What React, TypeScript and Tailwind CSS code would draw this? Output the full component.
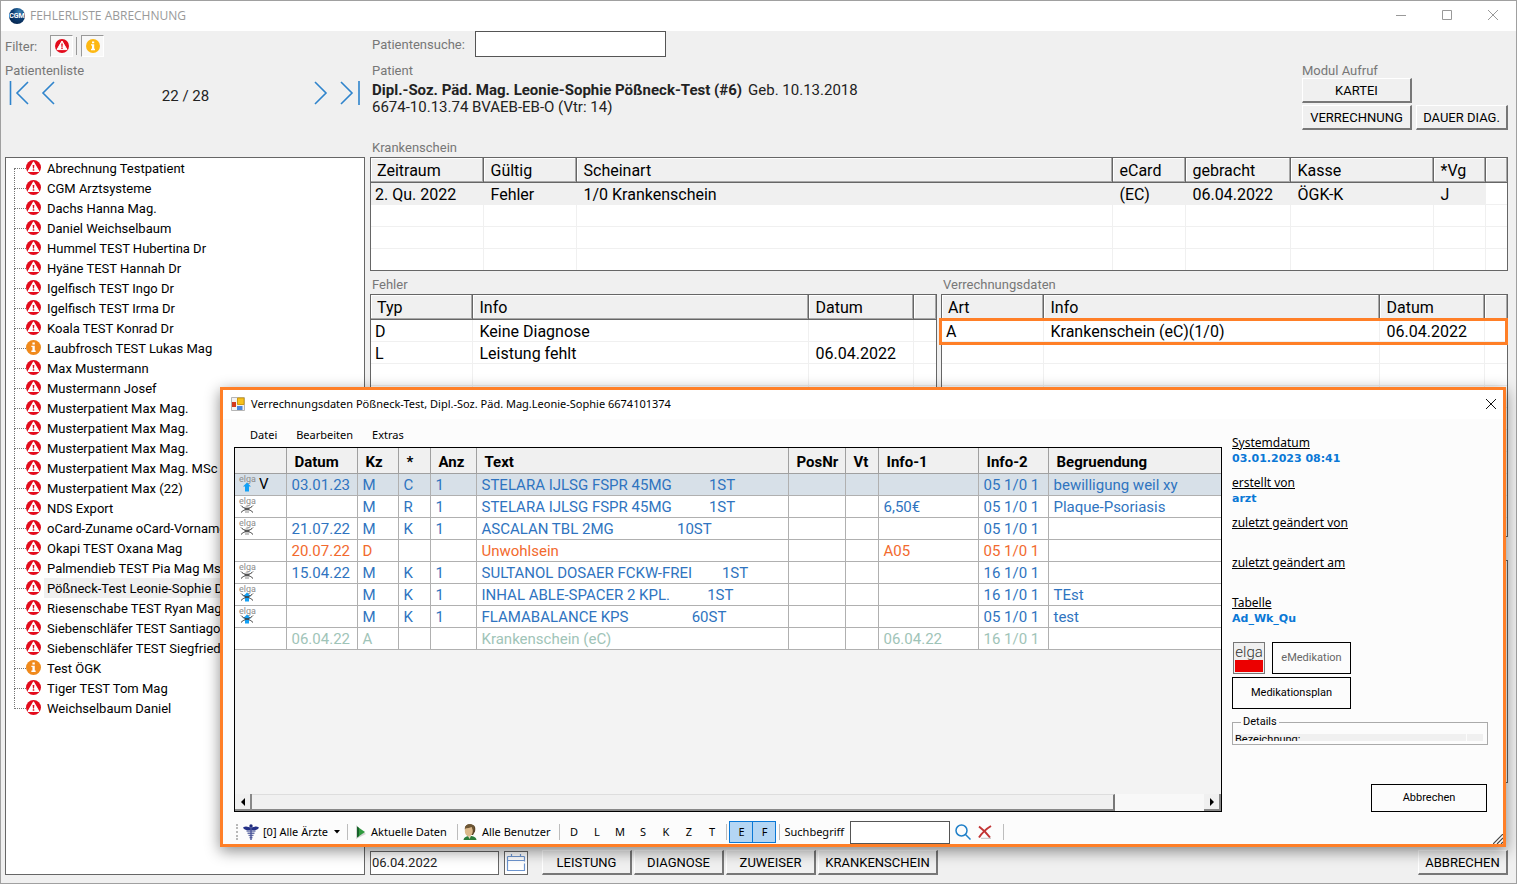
import type { ReactNode } from 'react';
import { clsx } from 'clsx';

type PatientEntry = { name: string; info?: boolean; selected?: boolean };

const PATIENTS: PatientEntry[] = [
  { name: 'Abrechnung Testpatient' },
  { name: 'CGM Arztsysteme' },
  { name: 'Dachs Hanna Mag.' },
  { name: 'Daniel Weichselbaum' },
  { name: 'Hummel TEST Hubertina Dr' },
  { name: 'Hyäne TEST Hannah Dr' },
  { name: 'Igelfisch TEST Ingo Dr' },
  { name: 'Igelfisch TEST Irma Dr' },
  { name: 'Koala TEST Konrad Dr' },
  { name: 'Laubfrosch TEST Lukas Mag', info: true },
  { name: 'Max Mustermann' },
  { name: 'Mustermann Josef' },
  { name: 'Musterpatient Max Mag.' },
  { name: 'Musterpatient Max Mag.' },
  { name: 'Musterpatient Max Mag.' },
  { name: 'Musterpatient Max Mag. MSc' },
  { name: 'Musterpatient Max (22)' },
  { name: 'NDS Export' },
  { name: 'oCard-Zuname oCard-Vorname' },
  { name: 'Okapi TEST Oxana Mag' },
  { name: 'Palmendieb TEST Pia Mag Msc' },
  { name: 'Pößneck-Test Leonie-Sophie D', selected: true },
  { name: 'Riesenschabe TEST Ryan Mag' },
  { name: 'Siebenschläfer TEST Santiago' },
  { name: 'Siebenschläfer TEST Siegfried' },
  { name: 'Test ÖGK', info: true },
  { name: 'Tiger TEST Tom Mag' },
  { name: 'Weichselbaum Daniel' },
];

type ElgaState = 'sent' | 'cancelled' | 'both';

type BillingRow = {
  elga?: ElgaState;
  flag?: string;
  tone: string;
  cells: string[];
  selected?: boolean;
};

const BLUE = 'text-[#2f74c0]';

const BILLING_COLUMNS = ['', 'Datum', 'Kz', '*', 'Anz', 'Text', 'PosNr', 'Vt', 'Info-1', 'Info-2', 'Begruendung'];

const BILLING_ROWS: BillingRow[] = [
  { elga: 'sent', flag: 'V', tone: BLUE, selected: true, cells: ['03.01.23', 'M', 'C', '1', 'STELARA IJLSG FSPR 45MG          1ST', '', '', '', '05 1/0 1', 'bewilligung weil xy'] },
  { elga: 'cancelled', tone: BLUE, cells: ['', 'M', 'R', '1', 'STELARA IJLSG FSPR 45MG          1ST', '', '', '6,50€', '05 1/0 1', 'Plaque-Psoriasis'] },
  { elga: 'cancelled', tone: BLUE, cells: ['21.07.22', 'M', 'K', '1', 'ASCALAN TBL 2MG                 10ST', '', '', '', '05 1/0 1', ''] },
  { tone: 'text-[#f26a2e]', cells: ['20.07.22', 'D', '', '', 'Unwohlsein', '', '', 'A05', '05 1/0 1', ''] },
  { elga: 'cancelled', tone: BLUE, cells: ['15.04.22', 'M', 'K', '1', 'SULTANOL DOSAER FCKW-FREI        1ST', '', '', '', '16 1/0 1', ''] },
  { elga: 'both', tone: BLUE, cells: ['', 'M', 'K', '1', 'INHAL ABLE-SPACER 2 KPL.          1ST', '', '', '', '16 1/0 1', 'TEst'] },
  { elga: 'both', tone: BLUE, cells: ['', 'M', 'K', '1', 'FLAMABALANCE KPS                 60ST', '', '', '', '05 1/0 1', 'test'] },
  { tone: 'text-[#9fc4b8]', cells: ['06.04.22', 'A', '', '', 'Krankenschein (eC)', '', '', '06.04.22', '16 1/0 1', ''] },
];

function AlertIcon({ className }: { className?: string }) {
  return (
    <svg viewBox="0 0 14 14" className={clsx('shrink-0', className)} aria-hidden="true">
      <circle cx="7" cy="7" r="7" fill="#e30b1c" />
      <path d="M7 2 12 10.600H2z" fill="#fff" stroke="#fff" strokeWidth="1" strokeLinejoin="round" />
      <path d="M6.200 4.600h1.600L7.500 8h-1zM6.300 8.600h1.400V10H6.300z" fill="#e30b1c" />
    </svg>
  );
}

function InfoIcon({ className, color }: { className?: string; color: string }) {
  return (
    <svg viewBox="0 0 14 14" className={clsx('shrink-0', className)} aria-hidden="true">
      <circle cx="7" cy="7" r="7" fill={color} />
      <path d="M6 2.400h2.200v1.900H6zM5 5.300h3.200v4.500H9V11.200H5V9.800h1V6.600H5z" fill="#fff" />
    </svg>
  );
}

function CgmLogo() {
  return (
    <svg viewBox="0 0 16 16" className="size-4" aria-hidden="true">
      <defs>
        <radialGradient id="cgm" cx="0.65" cy="0.25" r="0.8">
          <stop offset="0" stopColor="#3f86b8" />
          <stop offset="0.5" stopColor="#0d3f75" />
          <stop offset="1" stopColor="#06264f" />
        </radialGradient>
      </defs>
      <circle cx="8" cy="8" r="8" fill="url(#cgm)" />
      <text x="8" y="10" textAnchor="middle" fontSize="7" fontWeight="700" fill="#fff" fontFamily="Roboto, sans-serif">CGM</text>
    </svg>
  );
}

function ElgaIcon({ state }: { state: ElgaState }) {
  return (
    <svg viewBox="0 0 16 16" className="size-4 shrink-0 overflow-visible" aria-hidden="true">
      <text x="0" y="6" fontSize="9" fill="#8c8c8c" fontFamily="Roboto, sans-serif">elga</text>
      {state === 'cancelled' && <path d="M8 7 11.500 10.500H10V15H6V10.500H4.500z" fill="#c4c4c4" />}
      {state !== 'cancelled' && <path d="M8 6.500 12 10.500h-2V15.500H6V10.500H4z" fill="#12a0f5" />}
      {state !== 'sent' && (
        <path d="M2 7.500c1 1.500 3.500 2.700 6 3.500s4.500 1.800 6 3.500M14 7.500c-1 1.500-3.500 2.700-6 3.500s-4.500 1.800-6 3.500" stroke="#3a3a3a" strokeWidth="1" fill="none" />
      )}
    </svg>
  );
}

function NavArrow({ label, d, className }: { label: string; d: string; className?: string }) {
  return (
    <button type="button" aria-label={label} className={clsx('h-6 w-5', className)}>
      <svg viewBox="0 0 20 24" className="h-6 w-5" fill="none" stroke="#2f84cc" strokeWidth="1.600">
        <path d={d} />
      </svg>
    </button>
  );
}

function ClassicButton({ children, className }: { children: ReactNode; className?: string }) {
  return (
    <button
      type="button"
      className={clsx(
        'h-[25px] border-t border-l border-r-2 border-b-2 border-t-white border-l-white border-r-[#777] border-b-[#777] bg-[#f0f0f0] pt-0.5 text-[13px] leading-4 whitespace-nowrap text-black',
        className,
      )}
    >
      {children}
    </button>
  );
}

function ClassicGrid({
  widths,
  columns,
  rows,
  emptyRows,
  highlight,
}: {
  widths: string[];
  columns: string[];
  rows: string[][];
  emptyRows: number;
  highlight?: boolean;
}) {
  const lines = [...rows, ...Array.from({ length: emptyRows }, () => columns.map(() => ''))];
  return (
    <table className="w-full table-fixed border-collapse text-[16px] leading-5 text-black">
      <colgroup>
        {widths.map((w, i) => <col key={i} className={w} />)}
      </colgroup>
      <thead>
        <tr className="h-6 bg-[#f0f0f0]">
          {columns.map((c, i) => (
            <th
              key={i}
              className="border-b border-r border-[#666] p-0 text-left font-normal shadow-[inset_-1px_-1px_0_#a8a8a8,inset_1px_1px_0_#fff] last:border-r-0"
            >
              <div className={clsx('h-[23px] pt-[3px]', i === 0 ? 'pl-1.5' : 'pl-[7px]')}>{c}</div>
            </th>
          ))}
        </tr>
      </thead>
      <tbody>
        {lines.map((r, y) => (
          <tr key={y} className="h-[22px]">
            {r.map((c, i) => (
              <td
                key={i}
                className={clsx(
                  'overflow-hidden border-r border-b border-[#f0f0f0] p-0 whitespace-nowrap last:border-r-0',
                  highlight && y === 0 && i < r.length - 1 && 'bg-[#f0f0f0]',
                )}
              >
                <div className={clsx('h-[21px] pt-[3px] leading-[18px]', i === 0 ? 'pl-1' : 'pl-[7px]')}>{c}</div>
              </td>
            ))}
          </tr>
        ))}
      </tbody>
    </table>
  );
}

function PatientTree() {
  return (
    <ul className="flex-1 overflow-hidden border border-[#666] bg-white text-[13px] leading-[22px] text-black">
      {PATIENTS.map((p, i) => (
        <li key={i} className="flex h-5 items-center pl-2">
          <span className="flex h-5 w-3 shrink-0 flex-col">
            <span className={clsx('h-[11px] border-b border-dotted border-[#777]', i > 0 && 'border-l')} />
            <span className={clsx('flex-1 border-dotted border-[#777]', i < PATIENTS.length - 1 && 'border-l')} />
          </span>
          <span className="flex h-5 items-start pt-0.5">
            {p.info ? <InfoIcon color="#f08a1c" className="size-[15px]" /> : <AlertIcon className="size-[15px]" />}
          </span>
          <span className={clsx('ml-[3px] h-5 flex-1 pl-[3px] whitespace-nowrap', p.selected && 'bg-[#f0f0f0]')}>{p.name}</span>
        </li>
      ))}
    </ul>
  );
}

function BillingTable() {
  return (
    <div className="flex flex-1 flex-col border border-black bg-[#f3f3f3]">
      <table className="w-full table-fixed border-collapse text-[15px] leading-5">
        <colgroup>
          <col className="w-[51px]" />
          <col className="w-[71px]" />
          <col className="w-[41px]" />
          <col className="w-8" />
          <col className="w-[46px]" />
          <col />
          <col className="w-[57px]" />
          <col className="w-[33px]" />
          <col className="w-[100px]" />
          <col className="w-[70px]" />
          <col className="w-[173px]" />
        </colgroup>
        <thead>
          <tr className="h-[25px] border-b border-[#a0a0a0] bg-[#f0f0f0]">
            {BILLING_COLUMNS.map((c, i) => (
              <th key={i} className="border-r border-[#a0a0a0] p-0 text-left font-bold text-black last:border-r-0">
                <div className="h-[22px] pt-[3px] pl-2">{c}</div>
              </th>
            ))}
          </tr>
        </thead>
        <tbody>
          {BILLING_ROWS.map((row, y) => (
            <tr key={y} className={clsx('h-[22px] border-b border-[#b0b0b0]', row.selected ? 'bg-[#d7e0e8]' : 'bg-white', row.tone)}>
              <td className="border-r border-[#b0b0b0] p-0">
                <div className="flex h-5 items-center gap-1 pl-1">
                  {row.elga && <ElgaIcon state={row.elga} />}
                  <span className="text-black">{row.flag}</span>
                </div>
              </td>
              {row.cells.map((c, i) => (
                <td key={i} className="border-r border-[#b0b0b0] p-0 whitespace-pre last:border-r-0">
                  <div className="h-[21px] pt-px pl-[5px]">{c}</div>
                </td>
              ))}
            </tr>
          ))}
        </tbody>
      </table>
      <div className="mt-auto flex h-[17px] bg-[#f8f8f8]">
        <button type="button" aria-label="Nach links" className="flex w-[17px] items-center justify-center border-r-2 border-b-2 border-[#888] bg-[#f0f0f0] text-black">
          <svg viewBox="0 0 4 8" className="h-2 w-1"><path d="M4 0v8L0 4z" /></svg>
        </button>
        <div className="w-[863px] max-w-full border-t border-r-2 border-b-2 border-t-[#ddd] border-r-[#777] border-b-[#888] bg-[#f0f0f0]" />
        <button type="button" aria-label="Nach rechts" className="ml-auto flex w-[17px] items-center justify-center border-r-2 border-b-2 border-[#888] bg-[#f0f0f0]">
          <svg viewBox="0 0 4 8" className="h-2 w-1"><path d="M0 0v8l4-4z" /></svg>
        </button>
      </div>
    </div>
  );
}

function Divider() {
  return <span className="h-4 w-px shrink-0 bg-[#bdbdbd]" />;
}

function DialogToolbar() {
  return (
    <div className="flex h-8 items-center pt-2 text-[11px] leading-4 whitespace-nowrap text-black">
      <span className="ml-0.5 h-4 w-0.5 border-l-2 border-dotted border-[#b8b8b8]" />
      <button type="button" className="ml-[5px] flex items-center gap-1">
        <svg viewBox="0 0 16 16" className="size-4" aria-hidden="true">
          <circle cx="8" cy="2" r="1.700" fill="#1f2a7a" />
          <path d="M0 3.500c3-2 5-.5 8 .2 3-.7 5-2.200 8-.2-1 2.500-4 3-6 2.500H6c-2 .5-5 0-6-2.500z" fill="#232f86" />
          <path d="M3.500 7h9M4.500 9.200h7M5.500 11.400h5M6.500 13.500h3" stroke="#6670a8" strokeWidth="1.400" />
          <path d="M8 3v13" stroke="#4a5499" strokeWidth="1.400" />
        </svg>
        [0] Alle Ärzte
        <svg viewBox="0 0 6 4" className="ml-0.5 h-1 w-1.5"><path d="M0 0h6L3 3.500z" /></svg>
      </button>
      <span className="w-[7px]" />
      <Divider />
      <button type="button" className="ml-[7px] flex items-center gap-1">
        <svg viewBox="0 0 12 16" className="h-4 w-3" aria-hidden="true">
          <path d="M1 1v14l10-5z" fill="#d4d4d4" />
          <path d="M2 2.500v11l8-5.500z" fill="#2f9a3e" />
          <path d="M2 2.500v11l2-1.500V4z" fill="#17602a" />
        </svg>
        Aktuelle Daten
      </button>
      <span className="w-2.5" />
      <Divider />
      <button type="button" className="ml-1 flex items-center gap-1">
        <svg viewBox="0 0 16 16" className="size-4" aria-hidden="true">
          <path d="M1.500 16c.5-3 3-4 6.500-4s6 1 6.500 4z" fill="#2c7d3b" />
          <path d="M3 6c-1-4 2-6 5.500-5.800C12.500.5 14 3 13 7.500L11 11H5z" fill="#5b4427" />
          <ellipse cx="6.800" cy="7" rx="4" ry="5.200" fill="#dcb98b" />
          <path d="M3 4.500C5 4 8 4 10 2.500 11 3 11.500 5 11.200 7c2-3 1-6.500-3-6.700C5 .2 3 2 3 4.500z" fill="#6e5735" />
          <path d="M6 12h3l-1.500 3z" fill="#e6d4b6" />
        </svg>
        Alle Benutzer
      </button>
      <span className="w-[9px]" />
      <Divider />
      <div className="ml-0.5 flex">
        {['D', 'L', 'M', 'S', 'K', 'Z', 'T'].map((k) => (
          <button key={k} type="button" className="h-[22px] w-[23px]">{k}</button>
        ))}
      </div>
      <span className="w-[3px]" />
      <Divider />
      <div className="ml-0.5 flex">
        <button type="button" className="h-[22px] w-6 border border-[#0a78d6] bg-[#b4d6f4]">E</button>
        <button type="button" className="-ml-px h-[22px] w-6 border border-[#0a78d6] bg-[#b4d6f4]">F</button>
      </div>
      <span className="w-[3px]" />
      <Divider />
      <label htmlFor="suchbegriff" className="ml-1">Suchbegriff</label>
      <input id="suchbegriff" type="text" className="ml-1.5 h-[23px] w-[100px] border border-[#555] bg-white px-1" />
      <button type="button" aria-label="Suchen" className="ml-[5px]">
        <svg viewBox="0 0 16 16" className="size-4" fill="none" stroke="#1f7fc8" strokeWidth="1.500">
          <circle cx="6.500" cy="6.500" r="5.500" />
          <path d="m10.500 10.500 5 5" />
        </svg>
      </button>
      <button type="button" aria-label="Suche löschen" className="ml-[7px]">
        <svg viewBox="0 0 14 14" className="size-[14px]" fill="none">
          <path d="M3 13.500h10" stroke="#ccc" strokeWidth="1.500" />
          <path d="M1 1.500c4 3 8 7 11 11" stroke="#c23434" strokeWidth="2" />
          <path d="M13 1C8 4 4 8 1 12.500" stroke="#c23434" strokeWidth="2" />
        </svg>
      </button>
      <span className="ml-[11px] h-4 w-px bg-[#bdbdbd]" />
    </div>
  );
}

function MetaField({ label, value }: { label: string; value?: string }) {
  return (
    <div>
      <dt className="h-4 underline">{label}</dt>
      <dd className="h-6 font-['DejaVu_Sans',sans-serif] text-[11px] font-bold text-[#0a78d6]">{value}</dd>
    </div>
  );
}

function DialogSidebar() {
  return (
    <aside className="flex w-64 flex-col pt-4 text-black">
      <dl className="text-[12px] leading-4">
        <MetaField label="Systemdatum" value="03.01.2023 08:41" />
        <MetaField label="erstellt von" value="arzt" />
        <MetaField label="zuletzt geändert von" />
        <MetaField label="zuletzt geändert am" />
        <MetaField label="Tabelle" value="Ad_Wk_Qu" />
      </dl>
      <div className="mt-[7px] ml-px flex gap-[7px] font-['Roboto',sans-serif] text-[11px]">
        <button type="button" className="flex h-8 w-8 flex-col border border-[#777] bg-[#f0f0f0] p-px">
          <span className="h-4 w-full text-center text-[15px] leading-4 font-light text-[#333]">elga</span>
          <span className="h-3 w-full bg-[#ec0000]" />
        </button>
        <button type="button" className="h-8 w-[79px] border border-black bg-[#fcfcfc] text-[#666]">eMedikation</button>
      </div>
      <button type="button" className="mt-[3px] h-8 w-[119px] border border-black bg-[#fcfcfc] font-['Roboto',sans-serif] text-[11px]">Medikationsplan</button>
      <fieldset className="mt-1 h-8 min-w-0 border border-[#aaa] px-0.5 font-['Roboto',sans-serif] text-[11px] leading-4">
        <legend className="ml-1.5 px-0.5 leading-[18px]">Details</legend>
        <div className="mt-[3px] mr-0.5 flex h-[7px] gap-px overflow-hidden leading-3">
          <span className="flex-1 bg-[#f0f0f0]">Bezeichnung:</span>
          <span className="w-4 bg-[#f0f0f0]" />
        </div>
      </fieldset>
      <button type="button" className="mt-auto mr-px mb-8 h-7 w-[116px] self-end border border-black bg-[#fcfcfc] font-['Roboto',sans-serif] text-[11px]">Abbrechen</button>
    </aside>
  );
}

function BillingDialog() {
  return (
    <section
      role="dialog"
      aria-labelledby="billing-title"
      className="absolute top-[386px] right-[10px] bottom-[36px] left-[219px] flex flex-col border-[3px] border-[#ff7f27] bg-[#fcfcfc] font-['Noto_Sans',sans-serif] shadow-[0_4px_14px_rgba(0,0,0,0.45)]"
    >
      <div className="flex h-[29px] items-center bg-white pr-1.5 pb-0.5 pl-2">
        <svg viewBox="0 0 14 14" className="size-[14px]" aria-hidden="true">
          <path d="M.5.5h13v13H.5z" fill="#f2f2f2" stroke="#b5b5b5" />
          <path d="M1 5h4v5H1z" fill="#d23a1e" />
          <path d="M6.500 1h6.500v6.500H6.500z" fill="#f6c11d" stroke="#d09a10" />
          <path d="M6 9h5.500v4H6z" fill="#4a86dc" />
        </svg>
        <h2 id="billing-title" className="ml-1.5 text-[11px] leading-4 text-black">
          Verrechnungsdaten Pößneck-Test, Dipl.-Soz. Päd. Mag.Leonie-Sophie 6674101374
        </h2>
        <button type="button" aria-label="Schließen" className="ml-auto">
          <svg viewBox="0 0 12 12" className="size-3" stroke="#111" fill="none"><path d="m1 1 10 10M11 1 1 11" /></svg>
        </button>
      </div>
      <div className="flex flex-1 gap-2.5 pr-[15px] pl-[11px]">
        <div className="flex min-w-0 flex-1 flex-col">
          <nav className="flex h-7 items-center gap-[19px] pt-1 pl-4 text-[11px] leading-4 text-black">
            <button type="button">Datei</button>
            <button type="button">Bearbeiten</button>
            <button type="button">Extras</button>
          </nav>
          <div className="flex flex-1 flex-col font-['Roboto',sans-serif]"><BillingTable /></div>
          <DialogToolbar />
        </div>
        <DialogSidebar />
      </div>
      <svg viewBox="0 0 10 10" className="absolute right-0 bottom-0 size-2.5" stroke="#444" strokeWidth="1.200" aria-hidden="true">
        <path d="M0 10 10 0M4 10l6-6M8 10l2-2" />
      </svg>
    </section>
  );
}

export default function App() {
  return (
    <div className="relative flex min-h-screen flex-col border border-[#a0a0a0] bg-[#f0f0f0] font-['Roboto',sans-serif] text-[13px] leading-4 text-[#777]">
      <header className="flex h-[30px] items-center bg-white pr-[17px] pl-2">
        <CgmLogo />
        <h1 className="ml-[5px] font-['Open_Sans',sans-serif] text-[12px] text-[#999]">FEHLERLISTE ABRECHNUNG</h1>
        <div className="ml-auto flex items-center gap-[34px]">
          <button type="button" aria-label="Minimieren"><svg viewBox="0 0 12 12" className="size-3" stroke="#999" fill="none"><path d="M1 5.500h10" /></svg></button>
          <button type="button" aria-label="Maximieren"><svg viewBox="0 0 12 12" className="size-3" stroke="#999" fill="none"><path d="M1.500.5h9v9h-9z" /></svg></button>
          <button type="button" aria-label="Schließen"><svg viewBox="0 0 12 12" className="size-3" stroke="#999" fill="none"><path d="m1 0 10 10M11 0 1 10" /></svg></button>
        </div>
      </header>

      <main className="flex flex-1 gap-[5px] pr-2 pb-2 pl-1">
        <div className="flex w-[360px] shrink-0 flex-col">
          <div className="flex h-[126px] shrink-0 flex-col pt-1">
            <div className="flex h-[22px] items-center">
              <span className="w-[45px] pt-0.5">Filter:</span>
              <button type="button" aria-label="Fehler" className="flex h-[22px] w-[23px] items-center justify-center border border-t-[#999] border-l-[#999] border-r-white border-b-white bg-[#f8f8f8]">
                <AlertIcon className="size-[14px]" />
              </button>
              <span className="mx-[3px] h-[18px] w-px bg-[#999]" />
              <button type="button" aria-label="Hinweise" className="ml-px flex h-[22px] w-[23px] items-center justify-center border border-t-[#999] border-l-[#999] border-r-white border-b-white bg-[#f8f8f8]">
                <InfoIcon color="#fdb813" className="size-[14px]" />
              </button>
            </div>
            <div className="mt-1.5">Patientenliste</div>
            <div className="mt-0.5 flex h-6 items-center pr-[5px] pl-1">
              <NavArrow label="Erster Patient" d="M1.500 0v24M19 1 8 12l11 11" />
              <NavArrow label="Voriger Patient" d="M13 1 2 12l11 11" className="ml-3" />
              <span className="flex-1 pt-1.5 text-center text-[15px] text-[#222]">22 / 28</span>
              <NavArrow label="Nächster Patient" d="M5 1l11 11L5 23" className="mr-2.5" />
              <NavArrow label="Letzter Patient" d="M1 1l11 11L1 23M19 0v24" />
            </div>
          </div>
          <PatientTree />
        </div>

        <div className="flex min-w-0 flex-1 flex-col">
          <div className="flex h-[126px] shrink-0 justify-between">
            <div className="flex flex-col pl-0.5">
              <div className="flex h-[26px] items-center">
                <label htmlFor="patientensuche" className="w-[103px] pt-0.5">Patientensuche:</label>
                <input id="patientensuche" type="text" className="h-[26px] w-[191px] border border-[#555] bg-white px-1 text-black" />
              </div>
              <div className="mt-1.5">Patient</div>
              <div className="mt-[3px] text-[15px] leading-[17px] text-[#222]">
                <div><strong className="mr-1.5 font-bold">Dipl.-Soz. Päd. Mag. Leonie-Sophie Pößneck-Test (#6)</strong>Geb. 10.13.2018</div>
                <div>6674-10.13.74 BVAEB-EB-O (Vtr: 14)</div>
              </div>
              <div className="mt-auto mb-px">Krankenschein</div>
            </div>
            <div className="pt-8">
              <div className="h-[15px]">Modul Aufruf</div>
              <div className="flex flex-col gap-0.5">
                <ClassicButton className="w-[110px]">KARTEI</ClassicButton>
                <div className="flex gap-1">
                  <ClassicButton className="w-[110px]">VERRECHNUNG</ClassicButton>
                  <ClassicButton className="w-[92px]">DAUER DIAG.</ClassicButton>
                </div>
              </div>
            </div>
          </div>

          <div className="h-[114px] shrink-0 overflow-hidden border border-[#666] bg-white">
            <ClassicGrid
              widths={['w-[112px]', 'w-[93px]', '', 'w-[73px]', 'w-[105px]', 'w-[143px]', 'w-[52px]', 'w-[22px]']}
              columns={['Zeitraum', 'Gültig', 'Scheinart', 'eCard', 'gebracht', 'Kasse', '*Vg', '']}
              rows={[['2. Qu. 2022', 'Fehler', '1/0 Krankenschein', '(EC)', '06.04.2022', 'ÖGK-K', 'J', '']]}
              emptyRows={3}
              highlight
            />
          </div>

          <div className="mt-1.5 flex gap-1">
            <div className="min-w-0 flex-1">
              <div className="pl-0.5">Fehler</div>
              <div className="mt-px h-[243px] overflow-hidden border border-[#666] bg-white">
                <ClassicGrid
                  widths={['w-[101px]', '', 'w-[105px]', 'w-[23px]']}
                  columns={['Typ', 'Info', 'Datum', '']}
                  rows={[['D', 'Keine Diagnose', '', ''], ['L', 'Leistung fehlt', '06.04.2022', '']]}
                  emptyRows={8}
                />
              </div>
            </div>
            <div className="relative min-w-0 flex-1">
              <div className="pl-0.5">Verrechnungsdaten</div>
              <div className="mt-px h-[243px] overflow-hidden border border-[#666] bg-white">
                <ClassicGrid
                  widths={['w-[101px]', '', 'w-[105px]', 'w-[23px]']}
                  columns={['Art', 'Info', 'Datum', '']}
                  rows={[['A', 'Krankenschein (eC)(1/0)', '06.04.2022', '']]}
                  emptyRows={9}
                />
              </div>
              <div className="absolute top-[41px] right-0 -left-0.5 h-[27px] border-[3px] border-[#ff7f27]" />
            </div>
          </div>

          <div className="mt-[23px] mb-[67px] flex-1 border border-[#666] bg-white" />

          <div className="flex h-[25px] items-center">
            <input type="text" aria-label="Datum" defaultValue="06.04.2022" className="h-6 w-[129px] border border-[#666] bg-white px-px text-[13px] text-[#222]" />
            <button type="button" aria-label="Kalender" className="ml-[5px] flex h-6 w-6 items-center justify-center border border-[#666] bg-white">
              <svg viewBox="0 0 20 20" className="size-5" fill="none" stroke="#6d95cf" strokeWidth="1.200">
                <path d="M1.500 3.500h17M1.500 3.500v14h17v-7M18.500 3.500v5M1.500 7.500h17M5.500 1v3M14.500 1v3" />
              </svg>
            </button>
            <div className="ml-3.5 flex gap-0.5">
              <ClassicButton className="w-[90px]">LEISTUNG</ClassicButton>
              <ClassicButton className="w-[90px]">DIAGNOSE</ClassicButton>
              <ClassicButton className="w-[90px]">ZUWEISER</ClassicButton>
              <ClassicButton className="w-[120px]">KRANKENSCHEIN</ClassicButton>
            </div>
            <ClassicButton className="ml-auto w-[90px]">ABBRECHEN</ClassicButton>
          </div>
        </div>
      </main>

      <BillingDialog />
    </div>
  );
}
